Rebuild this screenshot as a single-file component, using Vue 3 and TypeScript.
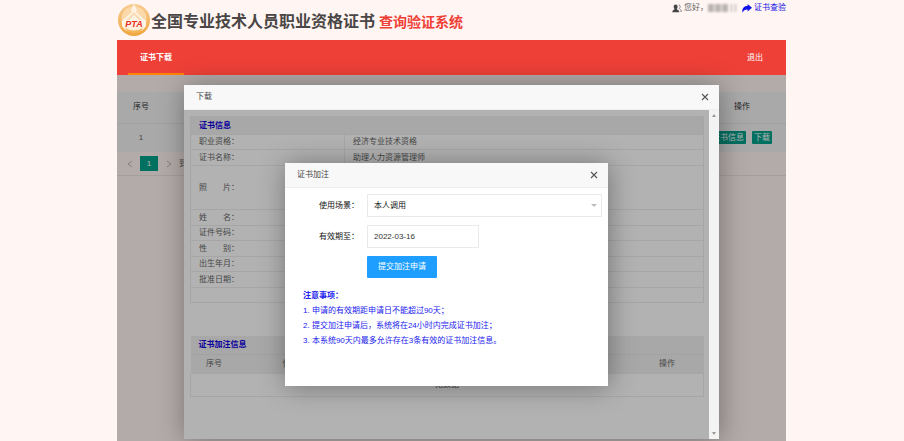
<script setup lang="ts">
import { ref } from 'vue'

interface InfoRow {
  label: string
  value: string
  tall?: boolean
}

const infoRows: InfoRow[] = [
  { label: '职业资格：', value: '经济专业技术资格' },
  { label: '证书名称：', value: '助理人力资源管理师' },
  { label: '照　　片：', value: '', tall: true },
  { label: '姓　　名：', value: '' },
  { label: '证件号码：', value: '' },
  { label: '性　　别：', value: '' },
  { label: '出生年月：', value: '' },
  { label: '批准日期：', value: '' },
  { label: '', value: '' },
]

const noteColumns = ['序号', '使用场景', '申请时间', '有效期至', '操作']

const notices = [
  '1. 申请的有效期距申请日不能超过90天；',
  '2. 提交加注申请后，系统将在24小时内完成证书加注；',
  '3. 本系统90天内最多允许存在3条有效的证书加注信息。',
]

const scene = ref('本人调用')
const validUntil = ref('2022-03-16')
</script>

<template>
  <div class="page">
    <header class="top">
      <svg class="logo" viewBox="0 0 34 34" aria-hidden="true">
        <defs>
          <linearGradient id="ring" x1="0" y1="0" x2="0" y2="1">
            <stop offset="0" stop-color="#f8cd92" />
            <stop offset="1" stop-color="#efa63f" />
          </linearGradient>
        </defs>
        <circle cx="17" cy="17" r="16" fill="url(#ring)" />
        <circle cx="17" cy="16" r="12.6" fill="#fbd9ab" />
        <path d="M17 1 L20 7 L19 9 L29 18 V23 H5 V18 L15 9 L14 7 Z" fill="#fff3e6" />
        <path d="M17 9 L25 17 H22 L17 12 L12 17 H9 Z" fill="#fbdcb4" />
        <path d="M5 23 H29 Q26 29 17 29 Q8 29 5 23 Z" fill="#fff0dc" />
        <path d="M8 25 Q17 30 26 25 Q23 30 17 30 Q11 30 8 25 Z" fill="#f5b658" />
        <text x="17" y="23.5" text-anchor="middle" class="logo-text">PTA</text>
      </svg>
      <h1 class="title">全国专业技术人员职业资格证书<span class="title-sub">查询验证系统</span></h1>
      <div class="user">
        <svg class="user-icon" viewBox="0 0 10 9" aria-hidden="true">
          <path d="M3.6 0.4 C5 0.4 5.7 1.4 5.6 2.8 C5.5 4 5 4.6 4.8 5 C5 5.8 7.2 6 7.4 8.2 H0.2 C0.3 6 2.4 5.8 2.6 5 C2.2 4.6 1.7 4 1.7 2.8 C1.7 1.4 2.2 0.4 3.6 0.4 Z" fill="#444" />
          <path d="M6.6 0.8 C8.4 0.8 8.6 3.4 7.4 4.6 C7.6 5.4 9.4 5.6 9.6 7.4 H8.4" fill="none" stroke="#777" stroke-width="0.9" />
        </svg>
        <span>您好，</span>
        <span class="masked"><i></i><i></i><i></i><b></b><b></b></span>
        <a class="verify" href="#verify">
          <svg class="share-icon" viewBox="0 0 10 9" aria-hidden="true">
            <path d="M5.6 0 L10 3.8 L5.6 7.6 V5.4 C3.2 5.3 1.6 6 0.6 8.8 C-0.4 5 1.6 2 5.6 2 Z" fill="#1010e8" />
          </svg>
          证书查验
        </a>
      </div>
    </header>

    <nav class="nav">
      <a class="nav-item active" href="#download">证书下载</a>
      <a class="nav-exit" href="#exit">退出</a>
    </nav>

    <main class="main">
      <table class="list">
        <thead>
          <tr><th class="col-no">序号</th><th></th><th class="col-ops">操作</th></tr>
        </thead>
        <tbody>
          <tr>
            <td class="col-no">1</td>
            <td></td>
            <td class="col-ops ops">
              <button type="button" class="op">证书信息</button>
              <button type="button" class="op">下载</button>
            </td>
          </tr>
        </tbody>
      </table>
      <div class="pager">
        <button type="button" class="step" aria-label="上一页">
          <svg viewBox="0 0 6 8"><path d="M5 1 L1 4 L5 7" /></svg>
        </button>
        <button type="button" class="current">1</button>
        <button type="button" class="step" aria-label="下一页">
          <svg viewBox="0 0 6 8"><path d="M1 1 L5 4 L1 7" /></svg>
        </button>
        <span class="jump">到第</span>
      </div>
      <div class="shade"></div>

      <section class="dialog download" role="dialog" aria-label="下载">
        <div class="dialog-head">
          <span>下载</span>
          <button type="button" class="close" aria-label="关闭">
            <svg viewBox="0 0 8 8"><path d="M1 1 L7 7 M7 1 L1 7" /></svg>
          </button>
        </div>
        <div class="frame">
          <div class="content">
            <table class="info">
              <thead>
                <tr><th colspan="2">证书信息</th></tr>
              </thead>
              <tbody>
                <tr v-for="(row, i) in infoRows" :key="i" :class="{ tall: row.tall }">
                  <td class="label">{{ row.label }}</td>
                  <td>{{ row.value }}</td>
                </tr>
              </tbody>
            </table>
            <table class="notes">
              <colgroup>
                <col class="narrow" />
                <col class="wide" />
                <col />
                <col />
                <col class="action" />
              </colgroup>
              <thead>
                <tr class="caption"><th :colspan="noteColumns.length">证书加注信息</th></tr>
                <tr class="columns"><th v-for="c in noteColumns" :key="c">{{ c }}</th></tr>
              </thead>
              <tbody>
                <tr><td :colspan="noteColumns.length">无数据</td></tr>
              </tbody>
            </table>
            <div class="shade"></div>

            <section class="dialog annotate" role="dialog" aria-label="证书加注">
              <div class="dialog-head">
                <span>证书加注</span>
                <button type="button" class="close" aria-label="关闭">
                  <svg viewBox="0 0 8 8"><path d="M1 1 L7 7 M7 1 L1 7" /></svg>
                </button>
              </div>
              <form class="form" @submit.prevent>
                <label for="scene">使用场景：</label>
                <div class="select">
                  <select id="scene" v-model="scene">
                    <option>本人调用</option>
                  </select>
                  <svg class="caret" viewBox="0 0 6 3" aria-hidden="true"><path d="M0 0 H6 L3 3 Z" /></svg>
                </div>
                <label for="valid">有效期至：</label>
                <input id="valid" v-model="validUntil" type="text" />
                <button type="submit" class="submit">提交加注申请</button>
              </form>
              <div class="notice">
                <strong>注意事项：</strong>
                <p v-for="n in notices" :key="n">{{ n }}</p>
              </div>
            </section>
          </div>
          <div class="scrollbar" aria-hidden="true">
            <svg viewBox="0 0 4 3"><path d="M0 3 L2 0 L4 3 Z" /></svg>
            <svg viewBox="0 0 4 3"><path d="M0 0 L2 3 L4 0 Z" /></svg>
          </div>
        </div>
      </section>
    </main>
  </div>
</template>

<style>
body {
  background: #fff5f2;
}
</style>

<style scoped>
* {
  box-sizing: border-box;
}

.page {
  display: flex;
  flex-direction: column;
  min-height: 100vh;
  padding: 0 118px 0 117px;
  font: 8px/12px "Liberation Sans", "Noto Sans CJK SC", sans-serif;
  color: #666;
}

button,
input,
select {
  margin: 0;
  border: 0;
  border-radius: 0;
  padding: 0;
  background: none;
  font: inherit;
  color: inherit;
}

a {
  color: inherit;
  text-decoration: none;
}

table {
  width: 100%;
  border-collapse: collapse;
  table-layout: fixed;
}

th,
td {
  padding: 0;
  line-height: 12px;
}

.top {
  display: flex;
  align-items: flex-start;
  height: 40px;
}

.logo {
  width: 34px;
  height: 34px;
  margin-top: 3px;
}

.logo-text {
  font: italic bold 9px "Liberation Sans", sans-serif;
  fill: #ea2f25;
}

.title {
  margin: 10px 0 0;
  font-size: 16px;
  line-height: 24px;
  font-weight: bold;
  color: #4a4646;
  white-space: nowrap;
}

.title-sub {
  margin-left: 4px;
  font-size: 14px;
  color: #ee4037;
}

.user {
  display: flex;
  align-items: center;
  height: 16px;
  margin-left: auto;
  white-space: nowrap;
}

.user-icon,
.share-icon {
  width: 10px;
  height: 9px;
}

.user-icon {
  margin-right: 2px;
}

.masked {
  display: flex;
  align-items: center;
  gap: 1px;
  width: 34px;
  filter: blur(1px);
}

.masked i {
  width: 6px;
  height: 8px;
  background: #bbb5b3;
}

.masked b {
  width: 1px;
  height: 8px;
  margin-left: 2px;
  background: #aaa;
}

.verify {
  display: flex;
  align-items: center;
  gap: 2px;
  color: #1010e8;
}

.nav {
  display: flex;
  justify-content: space-between;
  height: 35px;
  padding: 0 11px;
  background: #ee4037;
  color: #fff;
  line-height: 35px;
}

.nav-item {
  padding: 0 12px;
  font-weight: bold;
}

.active {
  border-bottom: 2px solid #ff8400;
}

.nav-exit {
  padding: 0 12px;
}

.main {
  position: relative;
  display: flex;
  flex: 1;
  flex-direction: column;
  padding-top: 17px;
}

.shade {
  position: absolute;
  inset: 0;
  background: rgba(0, 0, 0, 0.3);
}

.list {
  background: #f2f2f2;
  text-align: center;
}

.list th {
  height: 31px;
  border-bottom: 1px solid #e6e6e6;
  font-weight: normal;
  color: #333;
}

.list td {
  height: 29px;
}

.col-no {
  width: 48px;
}

.col-ops {
  width: 88px;
}

.ops {
  padding-right: 14px;
  text-align: right;
  white-space: nowrap;
}

.op {
  height: 13px;
  margin-left: 6px;
  border-radius: 1px;
  padding: 0 2px;
  background: #00a18c;
  color: #fff;
  line-height: 13px;
}

.pager {
  display: flex;
  align-items: center;
  height: 24px;
  border-bottom: 1px solid #ece4e0;
  padding-left: 6px;
}

.step {
  width: 14px;
  height: 15px;
}

.step svg {
  display: block;
  width: 6px;
  height: 8px;
  margin: 0 auto;
  fill: none;
  stroke: #bbb;
}

.current {
  width: 18px;
  height: 15px;
  margin: 0 4px 0 3px;
  background: #00a18c;
  color: #fff;
}

.jump {
  margin-left: 3px;
}

.dialog {
  position: absolute;
  background: #fff;
  box-shadow: 1px 1px 25px rgba(0, 0, 0, 0.35);
}

.dialog-head {
  display: flex;
  align-items: center;
  justify-content: space-between;
  height: 25px;
  padding: 0 10px 0 12px;
  border-bottom: 1px solid #eee;
  background: #f8f8f8;
  color: #444;
}

.close {
  width: 8px;
  height: 8px;
}

.close svg {
  display: block;
  stroke: #555;
  stroke-width: 1.1;
}

.download {
  display: flex;
  flex-direction: column;
  inset: 10px 67px 2px;
}

.frame {
  display: flex;
  flex: 1;
}

.content {
  position: relative;
  flex: 1;
  padding: 6px 5px 0 6px;
}

.scrollbar {
  display: flex;
  flex-direction: column;
  justify-content: space-between;
  align-items: center;
  width: 10px;
  padding: 4px 0;
  background: #f3f3f3;
}

.scrollbar svg {
  width: 4px;
  height: 3px;
  fill: #999;
}

.info th,
.caption th {
  height: 18px;
  padding-left: 8px;
  background: #f1f1f1;
  text-align: left;
  color: #1000e0;
}

.info td {
  height: 15px;
  border: 1px solid #eee;
  padding-left: 8px;
}

.info tr:nth-child(even) td {
  height: 16px;
}

.info .tall td {
  height: 44px;
}

.info th:first-child {
  border: 1px solid #eee;
}

.info td.label {
  width: 154px;
}

.info {
  table-layout: auto;
}

.notes {
  margin-top: 33px;
  text-align: center;
}

.columns th {
  height: 19px;
  border-top: 1px solid #e8e8e8;
  background: #f1f1f1;
  font-weight: normal;
}

.narrow {
  width: 47px;
}

.wide {
  width: 122px;
}

.action {
  width: 73px;
}

.notes td {
  height: 23px;
  border: 1px solid #eee;
}

.annotate {
  top: 53px;
  left: 101px;
  right: 101px;
  padding-bottom: 38px;
}

.form {
  display: grid;
  grid-template-columns: 74px 1fr;
  gap: 8px;
  align-items: center;
  padding: 6px 6px 0 0;
  color: #111;
}

.form label {
  text-align: right;
  white-space: nowrap;
}

.select {
  position: relative;
}

.select select,
.form input {
  display: block;
  height: 23px;
  border: 1px solid #eaeaea;
  padding: 0 6px;
  background: #fff;
}

.select select {
  width: 100%;
  appearance: none;
}

.form input {
  width: 112px;
  color: #333;
}

.caret {
  position: absolute;
  top: 10px;
  right: 5px;
  width: 6px;
  height: 3px;
  fill: #bbb;
}

.submit {
  grid-column: 2;
  justify-self: start;
  height: 22px;
  border-radius: 1px;
  padding: 0 11px;
  background: #1e9fff;
  color: #fff;
}

.notice {
  padding: 10px 18px 0;
  color: #2020ee;
  line-height: 15px;
}

.notice p {
  margin: 0;
}
</style>
